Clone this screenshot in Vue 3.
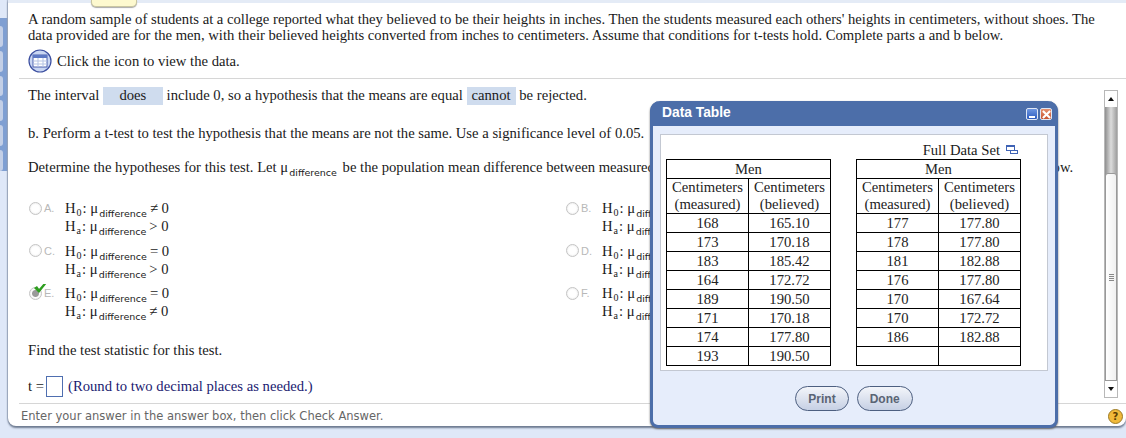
<template>
  <div class="page">
    <div class="rail">
      <span v-for="n in 6" :key="n" class="rail-tab"></span>
    </div>
    <main class="card">
      <div class="note-tab"></div>
      <div class="question">
        <p class="intro">A random sample of students at a college reported what they believed to be their heights in inches. Then the students measured each others' heights in centimeters, without shoes. The data provided are for the men, with their believed heights converted from inches to centimeters. Assume that conditions for t-tests hold. Complete parts a and b below.</p>
        <div class="icon-row">
          <svg class="data-icon" width="24" height="24" viewBox="0 0 24 24">
            <circle cx="12" cy="12" r="11" fill="#c9d6f3" stroke="#3c4fa0" stroke-width="1.2" />
            <rect x="5" y="6" width="14" height="12" fill="#fff" stroke="#4a5fae" />
            <rect x="5" y="6" width="14" height="3" fill="#5d78c4" />
            <path d="M5 12h14M5 15h14M10 9v9M15 9v9" stroke="#b5c3e4" fill="none" />
          </svg>
          <span>Click the icon to view the data.</span>
        </div>
      </div>
      <div class="scroll-area">
        <div class="answer-body">
          <p class="interval">The interval <span class="pick wide">does</span> include 0, so a hypothesis that the means are equal <span class="pick">cannot</span> be rejected.</p>
          <p class="part-b">b. Perform a t-test to test the hypothesis that the means are not the same. Use a significance level of 0.05.</p>
          <p class="determine">Determine the hypotheses for this test. Let <span class="mu">μ</span><sub class="sub-diff">difference</sub> be the population mean difference between measured and believed heights. Then select the one correct answer choice below.</p>
          <div class="choices">
            <div v-for="c in choices" :key="c.letter" class="choice">
              <span class="radio-wrap">
                <span class="radio" :class="{ picked: c.picked }"></span>
                <svg v-if="c.picked" class="check" width="15" height="13" viewBox="0 0 15 13">
                  <path d="M1 7l3-2 2 3 6-7 2 1-8 10z" fill="#2e9e1f" />
                </svg>
                <span class="letter">{{ c.letter }}.</span>
              </span>
              <div class="hyp">
                <div class="hyp-line">H<sub class="sub-h">0</sub>: <span class="mu">μ</span><sub class="sub-diff">difference</sub><span class="rel">{{ c.h0 }}</span></div>
                <div class="hyp-line">H<sub class="sub-h">a</sub>: <span class="mu">μ</span><sub class="sub-diff">difference</sub><span class="rel">{{ c.ha }}</span></div>
              </div>
            </div>
          </div>
          <p class="find">Find the test statistic for this test.</p>
          <div class="answer-row">
            <span>t =</span>
            <span class="answer-box"></span>
            <span class="round-note">(Round to two decimal places as needed.)</span>
          </div>
        </div>
        <div class="scrollbar">
          <span class="arrow up"></span>
          <div class="track">
            <div class="thumb-top"></div>
            <div class="thumb">
              <span class="grip"></span>
            </div>
          </div>
          <span class="arrow down"></span>
        </div>
      </div>
      <footer class="status">
        <span>Enter your answer in the answer box, then click Check Answer.</span>
        <span class="help">?</span>
      </footer>
    </main>

    <section class="dialog">
      <header class="dialog-title">
        <span>Data Table</span>
        <div class="win-btns">
          <span class="win-btn min"></span>
          <span class="win-btn close">
            <svg width="9" height="9" viewBox="0 0 10 10"><path d="M1 1l8 8M9 1l-8 8" stroke="#fff" stroke-width="2.4" /></svg>
          </span>
        </div>
      </header>
      <div class="dialog-body">
        <div class="panel">
          <div class="full-set">
            <span>Full Data Set</span>
            <svg width="12" height="10" viewBox="0 0 12 10">
              <rect x="0.5" y="0.5" width="8" height="5" fill="#fff" stroke="#3f63b5" />
              <rect x="0.5" y="0.5" width="8" height="1.5" fill="#3f63b5" />
              <rect x="4.5" y="5.5" width="7" height="3" fill="#fff" stroke="#3f63b5" />
            </svg>
          </div>
          <div class="tables">
            <table v-for="(t, i) in tables" :key="i" class="data">
              <thead>
                <tr><th colspan="2" class="men">Men</th></tr>
                <tr>
                  <th>Centimeters<br />(measured)</th>
                  <th>Centimeters<br />(believed)</th>
                </tr>
              </thead>
              <tbody>
                <tr v-for="(r, j) in t" :key="j">
                  <td>{{ r[0] }}</td>
                  <td>{{ r[1] }}</td>
                </tr>
              </tbody>
            </table>
          </div>
        </div>
        <div class="dialog-actions">
          <button class="pill">Print</button>
          <button class="pill">Done</button>
        </div>
      </div>
    </section>
  </div>
</template>

<script setup>
const choices = [
  { letter: 'A', h0: '≠ 0', ha: '> 0' },
  { letter: 'B', h0: '= 0', ha: '< 0' },
  { letter: 'C', h0: '= 0', ha: '> 0' },
  { letter: 'D', h0: '≠ 0', ha: '= 0' },
  { letter: 'E', h0: '= 0', ha: '≠ 0', picked: true },
  { letter: 'F', h0: '= 0', ha: '< 0' }
]

const tables = [
  [
    ['168', '165.10'],
    ['173', '170.18'],
    ['183', '185.42'],
    ['164', '172.72'],
    ['189', '190.50'],
    ['171', '170.18'],
    ['174', '177.80'],
    ['193', '190.50']
  ],
  [
    ['177', '177.80'],
    ['178', '177.80'],
    ['181', '182.88'],
    ['176', '177.80'],
    ['170', '167.64'],
    ['170', '172.72'],
    ['186', '182.88'],
    ['', '']
  ]
]
</script>

<style>
html,
body {
  margin: 0;
  background: #dfe8f8;
}
</style>

<style scoped>
.page {
  position: relative;
  width: 1126px;
  height: 438px;
  overflow: hidden;
  display: flex;
  background: #dfe8f8;
  font-family: "Liberation Serif", serif;
  font-size: 14.67px;
  color: #1a1a1a;
}

.rail {
  width: 8px;
  height: 153px;
  margin-top: 18px;
  flex-shrink: 0;
  background: #7f9fd2;
  display: flex;
  flex-direction: column;
  gap: 4px;
  padding-top: 8px;
  box-sizing: border-box;
}

.rail-tab {
  width: 3px;
  height: 21px;
  background: #c3cfe6;
  border-radius: 0 6px 6px 0;
}

.card {
  position: relative;
  width: 1118px;
  height: 426px;
  padding-top: 3px;
  box-sizing: border-box;
  background: #fff;
  border-radius: 0 0 8px 8px;
  box-shadow: 0 2px 2px #6d7a90, -1px 0 1px #a9b4c8;
  display: flex;
  flex-direction: column;
}

.card::before {
  content: "";
  position: absolute;
  left: 0;
  right: 0;
  top: 0;
  height: 3px;
  background: #e4ebf6;
}

.note-tab {
  position: absolute;
  left: 83px;
  top: 0;
  width: 46px;
  height: 7px;
  background: #fdf9cf;
  border: 1px solid #c9c6a2;
  border-top: none;
  border-radius: 0 0 5px 5px;
  box-sizing: border-box;
  box-shadow: 0 1px 1px #aaa;
}

.question {
  padding: 8px 20px 0;
}

.intro {
  margin: 0;
  line-height: 16px;
}

.icon-row {
  display: flex;
  align-items: center;
  gap: 5px;
  margin-top: 6px;
  height: 24px;
}

.data-icon {
  flex-shrink: 0;
}

.scroll-area {
  position: relative;
  margin: 5px 0 0 11px;
  border-top: 1px solid #d6d6d6;
  height: 324px;
  flex-shrink: 0;
  display: flex;
}

.answer-body {
  flex: 1;
  padding: 0 0 0 9px;
  min-width: 0;
}

.answer-body p {
  margin: 0;
  line-height: 16px;
}

.interval {
  padding-top: 8px;
}

.pick {
  display: inline-block;
  background: #cfdcee;
  padding: 1px 5px 2px;
  line-height: 15px;
}

.pick.wide {
  width: 60px;
  box-sizing: border-box;
  text-align: center;
}

.part-b {
  margin-top: 20px !important;
}

.determine {
  margin-top: 18px !important;
  white-space: nowrap;
}

.sub-diff {
  font-family: "DejaVu Sans", sans-serif;
  font-size: 9.5px;
  line-height: 0;
  vertical-align: -4px;
  margin-left: 1px;
  margin-right: 2px;
}

.choices {
  margin-top: 24px;
  display: grid;
  grid-template-columns: 537px 1fr;
  grid-auto-rows: 42.5px;
  height: 128px;
}

.choice {
  display: flex;
  white-space: nowrap;
  overflow: hidden;
}

.radio-wrap {
  position: relative;
  display: flex;
  align-items: center;
  width: 36px;
  height: 18px;
  font-family: "Liberation Sans", sans-serif;
  font-size: 11px;
  color: #b8b8b8;
  flex-shrink: 0;
  margin-left: 1px;
}

.radio {
  width: 11px;
  height: 11px;
  border: 1px solid #c4c4c4;
  border-radius: 50%;
  margin-right: 2px;
  box-shadow: inset 0 0 2px #ddd;
}

.radio.picked {
  background: radial-gradient(circle, #9a9a9a 0 3px, #fff 4px);
}

.check {
  position: absolute;
  left: 4px;
  top: -3px;
}

.hyp {
  line-height: 18px;
}

.hyp-line {
  height: 18px;
}

.sub-h {
  font-size: 10px;
  line-height: 0;
  vertical-align: -3px;
  margin: 0 1px;
}

.rel {
  margin-left: 1px;
}

.find {
  margin-top: 15px !important;
}

.answer-row {
  display: flex;
  align-items: center;
  gap: 2px;
  margin-top: 18px;
  height: 20px;
}

.answer-box {
  width: 15px;
  height: 19px;
  border: 1px solid #4f6fb0;
  margin-right: 3px;
}

.round-note {
  color: #1a1a70;
}

.scrollbar {
  position: absolute;
  right: 8px;
  top: 11px;
  width: 14px;
  height: 308px;
  border: 1px solid #b8b8b8;
  box-sizing: border-box;
  display: flex;
  flex-direction: column;
  background: #fff;
}

.arrow {
  height: 16px;
  flex-shrink: 0;
  position: relative;
}

.arrow::after {
  content: "";
  position: absolute;
  left: 3px;
  top: 6px;
  border-left: 3px solid transparent;
  border-right: 3px solid transparent;
}

.arrow.up::after {
  border-bottom: 4px solid #111;
}

.arrow.down::after {
  border-top: 4px solid #111;
}

.track {
  flex: 1;
  display: flex;
  flex-direction: column;
  background: linear-gradient(90deg, #8f8f8f, #dcdcdc 50%, #9e9e9e);
}

.thumb-top {
  height: 66px;
}

.thumb {
  flex: 1;
  background: linear-gradient(90deg, #fff, #f0f0f0);
  border: 1px solid #999;
  border-radius: 3px 3px 1px 1px;
  display: flex;
  align-items: center;
  justify-content: center;
}

.grip {
  width: 5px;
  height: 7px;
  background: repeating-linear-gradient(#888 0 1px, transparent 1px 2px);
}

.status {
  position: absolute;
  left: 11px;
  right: 0;
  top: 403px;
  padding: 5px 0 0 2px;
  font-family: "DejaVu Sans", sans-serif;
  font-size: 11.5px;
  color: #666;
  border-top: 1px solid #d6d6d6;
  display: flex;
}

.help {
  position: absolute;
  right: 3px;
  top: 5px;
  width: 15px;
  height: 15px;
  border-radius: 50%;
  background: #f0b93a;
  border: 1px solid #9c7a25;
  box-sizing: border-box;
  color: #5b3d00;
  font-weight: bold;
  font-size: 10px;
  line-height: 13px;
  text-align: center;
}

.dialog {
  position: absolute;
  left: 650px;
  top: 101px;
  width: 408px;
  height: 327px;
  box-sizing: border-box;
  border: 3px solid #4c6ea9;
  border-top: none;
  border-radius: 10px 10px 8px 8px;
  background: #e6edfb;
  box-shadow: 0 1px 2px #666;
  display: flex;
  flex-direction: column;
}

.dialog-title {
  height: 25px;
  margin: 0 -3px;
  padding: 4px 6px 0 12px;
  box-sizing: border-box;
  background: #4c6ea9;
  border-radius: 10px 10px 0 0;
  color: #fff;
  font-family: "Liberation Sans", sans-serif;
  font-size: 13.8px;
  font-weight: bold;
  display: flex;
  justify-content: space-between;
  flex-shrink: 0;
}

.win-btns {
  display: flex;
  gap: 2px;
  margin-top: 3px;
}

.win-btn {
  width: 12px;
  height: 12px;
  border-radius: 2px;
  box-sizing: border-box;
  border: 1px solid #dfe7f5;
  display: flex;
  align-items: center;
  justify-content: center;
}

.win-btn.min {
  background: linear-gradient(#6d96e0, #2d5cc0);
  position: relative;
}

.win-btn.min::after {
  content: "";
  position: absolute;
  left: 2px;
  bottom: 1px;
  width: 6px;
  height: 2px;
  background: #fff;
}

.win-btn.close {
  background: linear-gradient(#e5926f, #c6532f);
}

.dialog-body {
  flex: 1;
  display: flex;
  flex-direction: column;
  padding: 8px 7px 0;
}

.panel {
  height: 237px;
  box-sizing: border-box;
  background: #fff;
  border: 1px solid #c3c8d2;
  padding: 6px 5px 0;
}

.full-set {
  display: flex;
  justify-content: flex-end;
  align-items: center;
  gap: 6px;
  padding-right: 24px;
  height: 18px;
}

.tables {
  display: flex;
  gap: 25px;
}

.data {
  border-collapse: collapse;
  width: 165px;
  table-layout: fixed;
  font-size: 14.67px;
  color: #222;
  border: 1px solid #000;
}

.data th,
.data td {
  border: 1px solid #000;
  text-align: center;
  font-weight: normal;
  padding: 0;
  line-height: 17px;
  height: 18px;
}

.men {
  height: 17px;
}

.dialog-actions {
  display: flex;
  justify-content: center;
  gap: 8px;
  margin-top: 15px;
}

.pill {
  height: 25px;
  padding: 0 12px;
  border: 1px solid #4d5f80;
  border-radius: 13px;
  background: linear-gradient(#f3f5fa, #c6d0e4);
  font-family: "Liberation Sans", sans-serif;
  font-size: 12px;
  font-weight: bold;
  color: #5a6474;
}
</style>
